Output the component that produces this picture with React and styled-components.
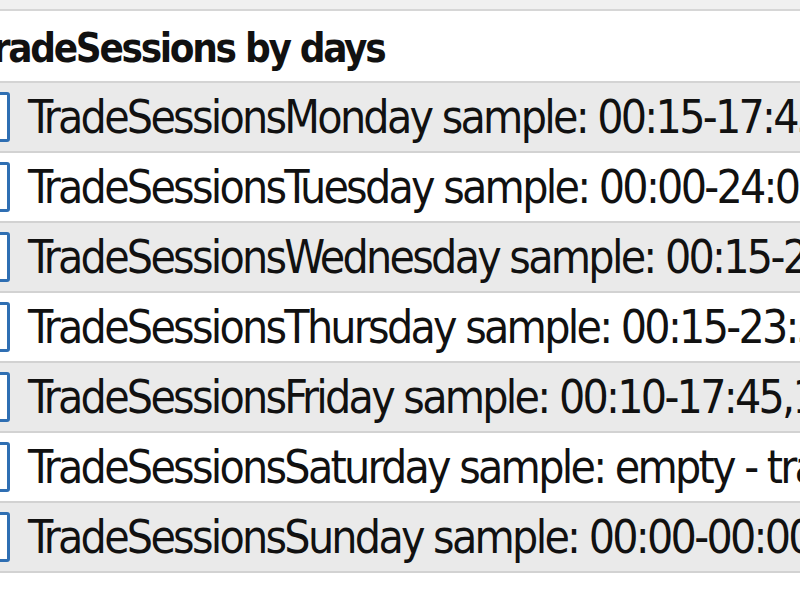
import React from "react"
import styled, { createGlobalStyle } from "styled-components"

const GlobalStyle = createGlobalStyle`
  html, body {
    margin: 0;
    padding: 0;
    background: #ffffff;
  }
  body {
    font-family: "DejaVu Sans Condensed", "DejaVu Sans", sans-serif;
    color: #111;
  }
`

const days = [
  { day: "Monday", sample: "00:15-17:45,18:00-23:59" },
  { day: "Tuesday", sample: "00:00-24:00" },
  { day: "Wednesday", sample: "00:15-23:59" },
  { day: "Thursday", sample: "00:15-23:59" },
  { day: "Friday", sample: "00:10-17:45,17:55-23:50" },
  { day: "Saturday", sample: "empty - trading disabled" },
  { day: "Sunday", sample: "00:00-00:00" },
]

export default function App() {
  return (
    <>
      <GlobalStyle />
      <Panel>
        <TopStrip />
        <Header>
          <HeaderTitle>TradeSessions by days</HeaderTitle>
        </Header>
        <List>
          {days.map((d, i) => (
            <Row key={d.day} $shaded={i % 2 === 0}>
              <CheckBox />
              <Label>
                TradeSessions{d.day} sample: {d.sample}
              </Label>
            </Row>
          ))}
        </List>
      </Panel>
    </>
  )
}

const Panel = styled.div`
  width: 800px;
  height: 600px;
  overflow: hidden;
  background: #ffffff;
  display: flex;
  flex-direction: column;
`

const TopStrip = styled.div`
  height: 9px;
  background: #f0f0f0;
  border-bottom: 2px solid #d6d6d6;
  flex-shrink: 0;
`

const Header = styled.div`
  height: 70px;
  display: flex;
  align-items: center;
  background: #ffffff;
  border-bottom: 2px solid #d4d4d4;
  flex-shrink: 0;
`

const HeaderTitle = styled.div`
  margin-left: -25px;
  padding-top: 4px;
  font-size: 40px;
  font-weight: bold;
  white-space: nowrap;
  letter-spacing: -2.3px;
`

const List = styled.div`
  display: flex;
  flex-direction: column;
`

const Row = styled.div`
  height: 68px;
  display: flex;
  align-items: center;
  background: ${(p) => (p.$shaded ? "#eaeaea" : "#ffffff")};
  border-bottom: 2px solid #d2d2d2;
  flex-shrink: 0;
`

const CheckBox = styled.div`
  width: 44px;
  height: 44px;
  margin-left: -40px;
  border: 3px solid #2f6fb3;
  border-radius: 3px;
  background: #ffffff;
  flex-shrink: 0;
`

const Label = styled.div`
  margin-left: 18px;
  font-size: 46px;
  white-space: nowrap;
  letter-spacing: -2.75px;
`
